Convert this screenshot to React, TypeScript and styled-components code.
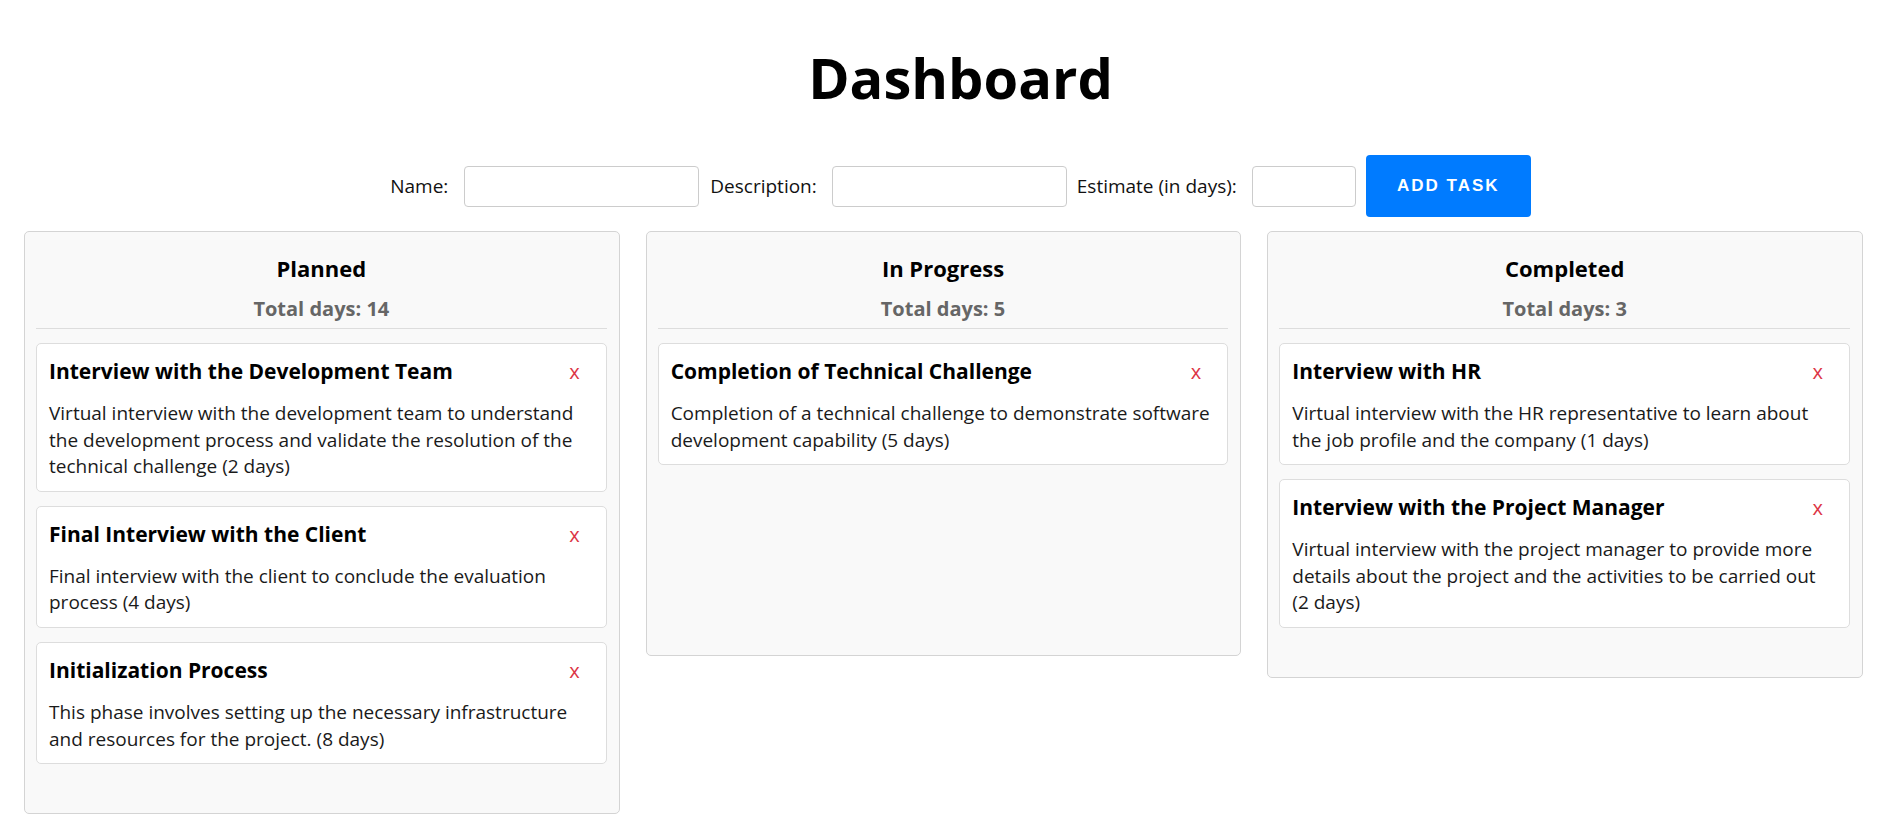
import styled, { createGlobalStyle } from "styled-components";

const GlobalStyle = createGlobalStyle`
  * {
    box-sizing: border-box;
  }
  body {
    margin: 0;
    background: #ffffff;
    font-family: "Open Sans", "Noto Sans", sans-serif;
    color: #000000;
  }
`;

type Task = {
  id: number;
  name: string;
  description: string;
  estimate: number;
};

type ColumnData = {
  id: string;
  title: string;
  tasks: Task[];
};

const columns: ColumnData[] = [
  {
    id: "planned",
    title: "Planned",
    tasks: [
      {
        id: 1,
        name: "Interview with the Development Team",
        description:
          "Virtual interview with the development team to understand the development process and validate the resolution of the technical challenge",
        estimate: 2,
      },
      {
        id: 2,
        name: "Final Interview with the Client",
        description:
          "Final interview with the client to conclude the evaluation process",
        estimate: 4,
      },
      {
        id: 3,
        name: "Initialization Process",
        description:
          "This phase involves setting up the necessary infrastructure and resources for the project.",
        estimate: 8,
      },
    ],
  },
  {
    id: "progress",
    title: "In Progress",
    tasks: [
      {
        id: 4,
        name: "Completion of Technical Challenge",
        description:
          "Completion of a technical challenge to demonstrate software development capability",
        estimate: 5,
      },
    ],
  },
  {
    id: "completed",
    title: "Completed",
    tasks: [
      {
        id: 5,
        name: "Interview with HR",
        description:
          "Virtual interview with the HR representative to learn about the job profile and the company",
        estimate: 1,
      },
      {
        id: 6,
        name: "Interview with the Project Manager",
        description:
          "Virtual interview with the project manager to provide more details about the project and the activities to be carried out",
        estimate: 2,
      },
    ],
  },
];

const Header = styled.header`
  padding-left: 22px;
`;

const Title = styled.h1`
  margin: 41px 0 42px;
  font-size: 56px;
  line-height: 72px;
  font-weight: 700;
  text-align: center;
`;

const Form = styled.form`
  display: flex;
  align-items: center;
  justify-content: center;
`;

const Label = styled.label<{ $gap?: number }>`
  font-size: 19px;
  margin-right: ${(p) => p.$gap ?? 15}px;
  color: #111;
`;

const Input = styled.input<{ $width: number; $gap?: number }>`
  width: ${(p) => p.$width}px;
  height: 41px;
  margin-right: ${(p) => p.$gap ?? 10}px;
  border: 1px solid #cccccc;
  border-radius: 4px;
  padding: 0 8px;
  font-size: 16px;
  outline: none;
`;

const AddButton = styled.button`
  width: 165px;
  height: 62px;
  border: none;
  border-radius: 4px;
  background: #007bff;
  color: #ffffff;
  font-family: "Liberation Sans", Arial, sans-serif;
  font-weight: 700;
  font-size: 17px;
  letter-spacing: 2px;
  text-transform: uppercase;
  cursor: pointer;
`;

const Board = styled.main`
  display: grid;
  grid-template-columns: repeat(3, 1fr);
  gap: 26px;
  align-items: start;
  padding: 14px 36px 20px 24px;
`;

const Column = styled.section`
  min-height: 425px;
  background: #f9f9f9;
  border: 1px solid #d4d4d4;
  border-radius: 5px;
  padding: 12px 12px 12px 11px;
`;

const ColumnHeader = styled.div`
  padding-top: 8px;
  padding-bottom: 6px;
  border-bottom: 1px solid #dddddd;
  text-align: center;
`;

const ColumnTitle = styled.h2`
  margin: 0 0 12px;
  font-size: 22px;
  line-height: 32px;
  font-weight: 700;
`;

const Total = styled.div`
  font-size: 20px;
  line-height: 26px;
  font-weight: 700;
  color: #666666;
`;

const TaskList = styled.div`
  padding-top: 14px;
  padding-bottom: 23px;
`;

const Card = styled.article`
  background: #ffffff;
  border: 1px solid #dddddd;
  border-radius: 5px;
  padding: 14px 14px 11px 12px;
  margin-bottom: 14px;
`;

const CardHeader = styled.div`
  display: flex;
  align-items: center;
  justify-content: space-between;
  margin-bottom: 15px;
`;

const CardTitle = styled.h3`
  margin: 0;
  font-size: 21px;
  line-height: 27px;
  font-weight: 700;
`;

const DeleteButton = styled.button`
  background: none;
  border: none;
  padding: 0 12px 0 8px;
  color: #dc3545;
  font-family: "Open Sans", sans-serif;
  font-size: 20px;
  line-height: 27px;
  cursor: pointer;
`;

const Description = styled.p`
  margin: 0;
  font-size: 19px;
  line-height: 26.6px;
  color: #1a1a1a;
`;

const TaskCard = ({ task }: { task: Task }) => (
  <Card>
    <CardHeader>
      <CardTitle>{task.name}</CardTitle>
      <DeleteButton type="button">x</DeleteButton>
    </CardHeader>
    <Description>
      {task.description} ({task.estimate} days)
    </Description>
  </Card>
);

const App = () => {
  return (
    <>
      <GlobalStyle />
      <Header>
        <Title>Dashboard</Title>
        <Form onSubmit={(e) => e.preventDefault()}>
          <Label $gap={16}>Name:</Label>
          <Input type="text" $width={235} $gap={11} />
          <Label>Description:</Label>
          <Input type="text" $width={235} />
          <Label>Estimate (in days):</Label>
          <Input type="number" $width={104} />
          <AddButton type="submit">Add Task</AddButton>
        </Form>
      </Header>
      <Board>
        {columns.map((col) => (
          <Column key={col.id}>
            <ColumnHeader>
              <ColumnTitle>{col.title}</ColumnTitle>
              <Total>
                Total days:{" "}
                {col.tasks.reduce((sum, t) => sum + t.estimate, 0)}
              </Total>
            </ColumnHeader>
            <TaskList>
              {col.tasks.map((task) => (
                <TaskCard key={task.id} task={task} />
              ))}
            </TaskList>
          </Column>
        ))}
      </Board>
    </>
  );
};

export default App;
